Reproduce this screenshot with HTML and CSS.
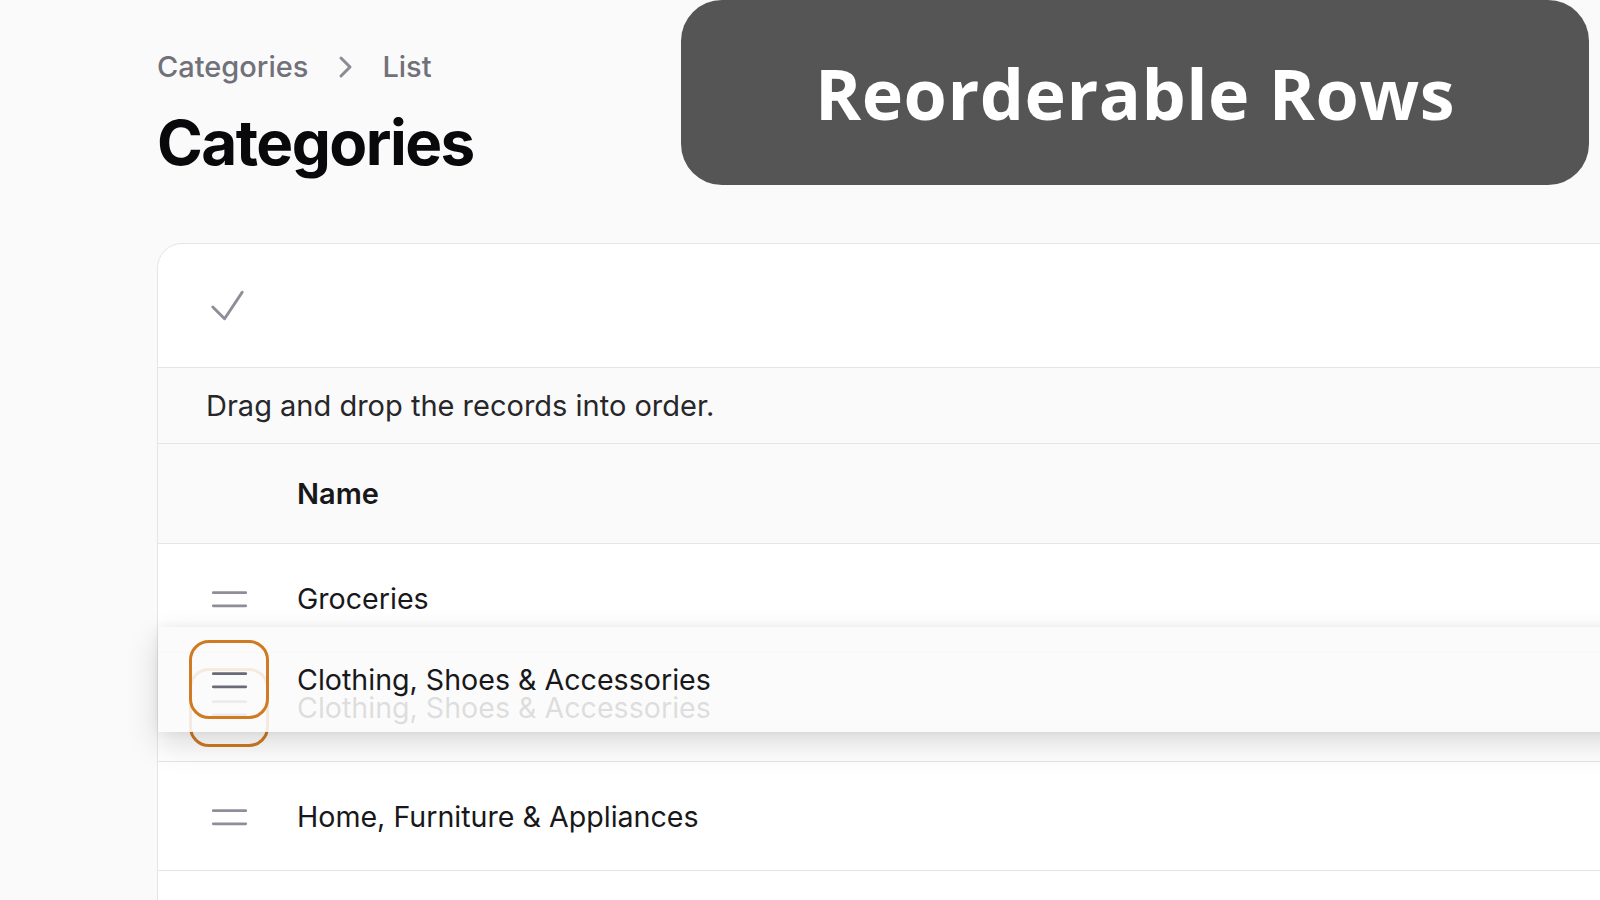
FILE: index.html
```html
<!DOCTYPE html>
<html>
<head>
<meta charset="utf-8">
<link rel="stylesheet" href="styles.css">
</head>
<body>
<div class="page">
  <nav class="crumbs">
    <span class="crumb">Categories</span>
    <svg class="chev" viewBox="0 0 20 20"><path d="M8 5.5 12.5 10 8 14.5"/></svg>
    <span class="crumb">List</span>
  </nav>
  <h1 class="title">Categories</h1>

  <div class="card">
    <div class="toolbar">
      <svg class="icon check" viewBox="0 0 24 24"><path d="m4.5 12.75 6 6 9-13.5"/></svg>
    </div>
    <div class="notice">Drag and drop the records into order.</div>
    <div class="thead"><span class="th">Name</span></div>
    <div class="row">
      <div class="handle"><svg class="icon bars" viewBox="0 0 24 24"><path d="M3.75 9h16.5m-16.5 6.75h16.5"/></svg></div>
      <span class="cell">Groceries</span>
    </div>
    <div class="row">
      <div class="handle focus"><svg class="icon bars" viewBox="0 0 24 24"><path d="M3.75 9h16.5m-16.5 6.75h16.5"/></svg></div>
      <span class="cell">Clothing, Shoes &amp; Accessories</span>
    </div>
    <div class="row">
      <div class="handle"><svg class="icon bars" viewBox="0 0 24 24"><path d="M3.75 9h16.5m-16.5 6.75h16.5"/></svg></div>
      <span class="cell">Home, Furniture &amp; Appliances</span>
    </div>
    <div class="row"></div>

    <div class="drag">
      <div class="handle focus"><svg class="icon bars dark" viewBox="0 0 24 24"><path d="M3.75 9h16.5m-16.5 6.75h16.5"/></svg></div>
      <span class="cell">Clothing, Shoes &amp; Accessories</span>
    </div>
  </div>
</div>

<div class="banner">Reorderable Rows</div>
</body>
</html>
```

FILE: styles.css
```css
html, body {
  margin: 0;
  padding: 0;
}
body {
  width: 1600px;
  height: 900px;
  overflow: hidden;
  background: #fafafa;
  font-family: Inter, "Noto Sans", sans-serif;
  color: #18181b;
  position: relative;
}
.page {
  padding: 48px 0 0 157px;
}
.crumbs {
  display: flex;
  align-items: center;
  gap: 17px;
  height: 38px;
}
.crumb {
  font-size: 29px;
  font-weight: 500;
  color: #71717a;
  line-height: 38px;
}
.chev {
  width: 40px;
  height: 40px;
  fill: none;
  stroke: #8b8b94;
  stroke-width: 1.5;
  stroke-linecap: round;
  stroke-linejoin: round;
}
.title {
  margin: 23px 0 0 0;
  font-size: 62px;
  line-height: 68px;
  font-weight: 700;
  letter-spacing: -0.025em;
  color: #09090b;
}
.card {
  position: relative;
  margin-top: 66px;
  width: 1700px;
  background: #fff;
  border: 1px solid #e5e5e5;
  border-radius: 25px;
}
.icon {
  width: 47px;
  height: 47px;
  fill: none;
  stroke-linecap: round;
  stroke-linejoin: round;
  stroke-width: 1.5;
  display: block;
}
.toolbar {
  height: 123px;
  display: flex;
  align-items: center;
  padding-left: 46px;
  border-radius: 25px 25px 0 0;
}
.check {
  stroke: #8e8e98;
}
.notice {
  height: 75px;
  border-top: 1px solid #e5e5e5;
  background: #fafafa;
  display: flex;
  align-items: center;
  padding-left: 48px;
  font-size: 29px;
  color: #27272a;
}
.thead {
  height: 99px;
  border-top: 1px solid #e5e5e5;
  background: #fafafa;
  display: flex;
  align-items: center;
  padding-left: 139px;
}
.th {
  font-size: 29px;
  font-weight: 600;
  color: #18181b;
}
.row {
  height: 108px;
  border-top: 1px solid #e5e5e5;
  display: flex;
  align-items: center;
  padding-left: 31px;
  gap: 28px;
}
.handle {
  width: 80px;
  height: 79px;
  box-sizing: border-box;
  border: 3px solid transparent;
  border-radius: 20px;
  display: flex;
  align-items: center;
  justify-content: center;
}
.handle.focus {
  border-color: #d07a22;
}
.bars {
  stroke: #8e8e99;
}
.bars.dark {
  stroke: #6b6b78;
}
.cell {
  font-size: 28.6px;
  color: #18181b;
}
.drag {
  position: absolute;
  left: 0;
  top: 383px;
  width: 100%;
  height: 105px;
  display: flex;
  align-items: center;
  padding-left: 31px;
  gap: 28px;
  box-sizing: border-box;
  background: rgba(250, 250, 250, 0.87);
  box-shadow: 0 12px 30px rgba(0, 0, 0, 0.15), 0 0 10px rgba(0, 0, 0, 0.05);
}
.banner {
  position: absolute;
  left: 681px;
  top: 0;
  width: 908px;
  height: 185px;
  border-radius: 41px;
  background: #555555;
  color: #fff;
  display: flex;
  align-items: center;
  justify-content: center;
  font-family: "Open Sans", sans-serif;
  font-weight: 700;
  font-size: 70px;
  letter-spacing: 0.5px;
}
```
